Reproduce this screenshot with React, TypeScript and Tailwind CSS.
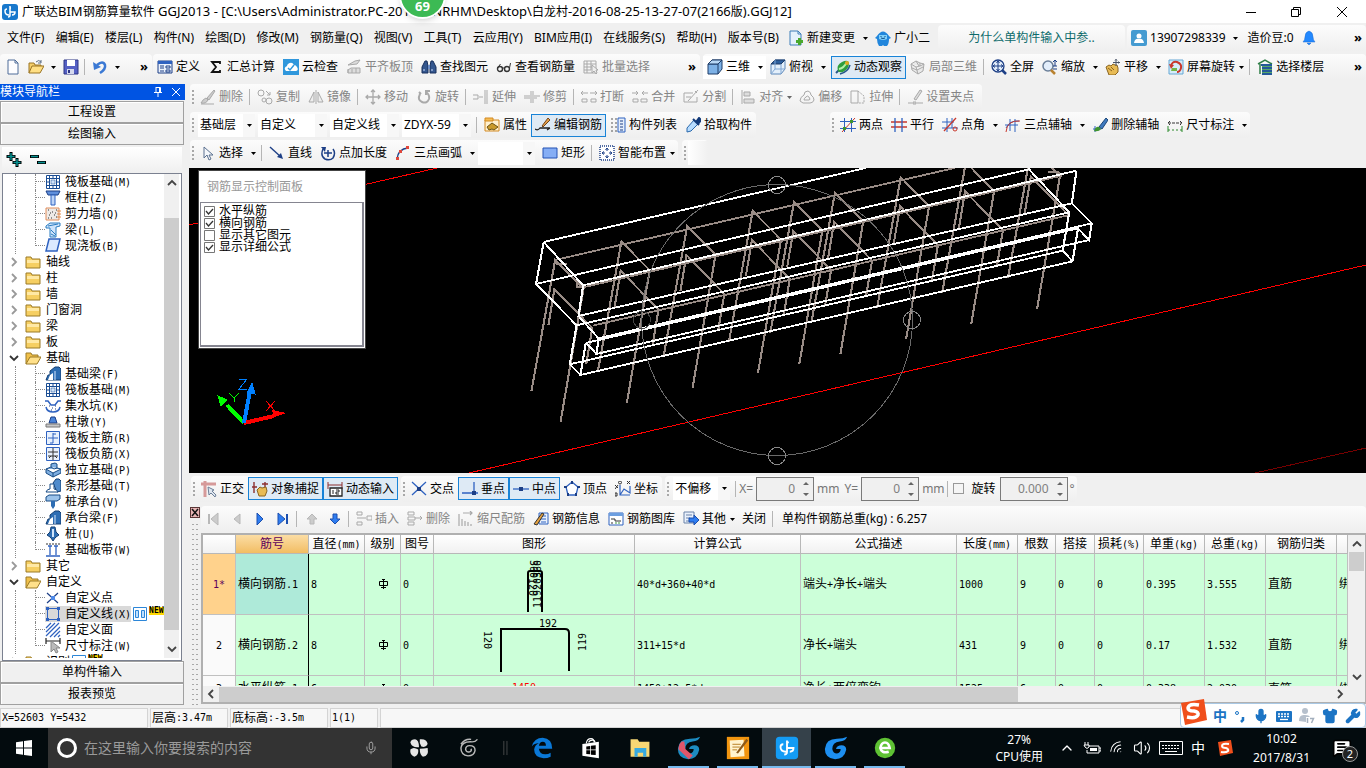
import type { ReactNode } from 'react';
import { Mic, ChevronUp, Wifi, Volume2, Shirt, Wrench, MessageSquareText } from 'lucide-react';

const B = '#2f62c0';
const G = '#a9a9a9';
const N = '#1d3f86';
const R = '#c8372c';

const glyphs: Record<string, ReactNode> = {
  newFile: <><path d="M3 1h7l3 3v11H3z" fill="#fdfdff" stroke="#4f6c99" /><path d="M10 1v3h3" fill="none" stroke="#4f6c99" /></>,
  open: <><path d="M1 14V4h5l1 2h6v2" fill="#f5cf6b" stroke="#9a7424" /><path d="M1 14l3-7h12l-4 7z" fill="#ffdf84" stroke="#9a7424" /><path d="M8 3q3-3 5 0m0-2v3h-3" fill="none" stroke="#5d6f86" /></>,
  save: <><path d="M1 1h14v14H1z" fill="#5560c4" stroke="#2c3484" /><path d="M4 1h8v6H4z" fill="#fff" /><path d="M4 10h7v5H4z" fill="#d5d9ee" /><path d="M5 11h2v3H5z" fill="#2c3484" /></>,
  undo: <><path d="M5 6q6-5 8 0q1 4-5 8" fill="none" stroke="#3b79d4" strokeWidth="2.5" /><path d="M1 3l1 8 7-3z" fill="#3b79d4" /></>,
  define: <><path d="M1 2h14v12H1z" fill="#eaf1fc" stroke={N} /><path d="M1 2h14v3H1z" fill={B} /><path d="M3 7h4M3 9h4M3 12h4M9 7h4v2H9zM9 11h4v2H9z" fill="none" stroke={N} /></>,
  sigma: <path d="M12 5V3H4l4 5-4 5h8v-2" fill="none" stroke="#111" strokeWidth="1.8" />,
  cloud: <><path d="M0 0h16v16H0z" fill="#2f97dc" /><path d="M3 12h10q3-1 1-4q-1-2-3-2q-2-4-6-1q-1 1-1 2q-4 2-1 5z" fill="#fff" /><path d="M5 9l2 2 4-5" fill="none" stroke="#2f97dc" strokeWidth="1.5" /></>,
  slab: <><path d="M2 6l7-4 5-1-3 4zM5 9h9v5H2v-3z" fill="#ddd" stroke={G} /><path d="M2 14v-4M6 14v-4M10 14V9" stroke={G} /></>,
  find: <><path d="M1 8l3-6h2l1 5v7H1zM15 8l-3-6h-2L9 7v7h6z" fill="#34578f" stroke="#172f5b" /><path d="M7 6h2v4H7z" fill="#6d8fc9" /><path d="M3 10v2M11 10v2" stroke="#cfe0ff" /></>,
  glasses: <><circle cx="4" cy="10" r="2.5" fill="none" stroke="#333" strokeWidth="1.4" /><circle cx="11" cy="10" r="2.5" fill="none" stroke="#333" strokeWidth="1.4" /><path d="M6.500 9h2M1.500 9l3-4M13.500 9l1-5" fill="none" stroke="#333" /></>,
  batch: <><path d="M1 2h12v12H1zM1 5h12M1 8h8M1 11h7M4 2v12M8 2v9" fill="none" stroke={G} /><path d="M9 6v8l2-2 2 3 1-1-1-3h2z" fill="#eee" stroke={G} /></>,
  cube: <><path d="M1 5l4-4h10v9l-4 5H1z" fill="#7db1e6" stroke="#1e3d69" /><path d="M1 5h10v10M11 5l4-4" fill="none" stroke="#1e3d69" /><path d="M1 5l4-4h10l-4 4z" fill="#b7d7f5" stroke="#1e3d69" /></>,
  topView: <><path d="M1 5l4-4h10v9l-4 5H1z" fill="#e3effb" stroke="#5b86b8" /><path d="M1 5l4-4h10l-4 4z" fill="#2c5f9e" stroke="#1e3d69" /><path d="M11 5v10M5 1v9h10M5 10l-4 5" fill="none" stroke="#7fa6d4" /></>,
  orbit: <><path d="M1 14l3-3" stroke="#25578a" strokeWidth="2" /><path d="M3 12Q1 6 7 3q6-3 7 1 0 6-6 9-4 1-5-1z" fill="#2f9e3c" /><path d="M4 10q5-1 8-7" fill="none" stroke="#b4f0a8" strokeWidth="2" /><path d="M5 15q8-2 10-9" fill="none" stroke="#25578a" strokeWidth="1.500" /><circle cx="12" cy="4" r="2" fill="#e2a81f" /></>,
  partial: <path d="M1 5l5-3 4 2 4 1-1 7-5 3-6-4zM1 5l5 3 4-1M6 8l2 7M6 2l3 5M10 4v3l4-2M2 9l5 2 6-3" fill="#e9e9e9" stroke={G} />,
  full: <><circle cx="7" cy="7" r="6" fill="#e3eefb" stroke={N} strokeWidth="1.300" /><path d="M7 2v10M2 7h10M5.500 4L7 2l1.500 2M5.500 10L7 12l1.500-2M4 5.500L2 7l2 1.500M10 5.500L12 7l-2 1.500" fill="none" stroke={N} /><path d="M11 11l4 4" stroke={N} strokeWidth="2.500" /></>,
  zoom: <><circle cx="6" cy="7" r="5" fill="#e3eefb" stroke="#6b7f99" strokeWidth="1.500" /><path d="M9 11l4 4" stroke="#b98230" strokeWidth="2.500" /><path d="M13 1v6M11 3l2-2 2 2M11 7h4M11 10h4" fill="none" stroke={N} /></>,
  pan: <><path d="M1 8l3-2 2 1 2-2 2 1 2 0 1 3v4l-3 3H4z" fill="#e8bb55" stroke="#8a6420" /><path d="M3 9l4 3M6 8l3 3" stroke="#8a6420" /><path d="M11 0v7M8 3.500h7M10 1.500l1-1 1 1M13.500 2.500l1 1-1 1" fill="none" stroke="#4a5568" /></>,
  rotateView: <><path d="M1 1h14v14H1z" fill="#d5ecfa" stroke="#65a7d4" /><path d="M3 7q1-5 6-4q5 2 4 6-1 4-4 4" fill="none" stroke={R} strokeWidth="2" /><path d="M4 9h5v3H3z" fill="#73b546" /><path d="M1 5l2 5 3-4z" fill={R} /></>,
  floors: <><path d="M1 5l7-4 7 4M3 5v10" fill="none" stroke="#2e7d46" strokeWidth="1.500" /><path d="M4 6h11M5 9h10M5 12h10M5 15h10" stroke="#245a99" strokeWidth="2" /><path d="M5 7.500h10M5 10.500h10M5 13.500h10" stroke="#56a868" /></>,
  change: <><path d="M2 1h8l3 3v11H2z" fill="#e4f1fc" stroke="#3f7fb9" /><path d="M10 1v3h3" fill="none" stroke="#3f7fb9" /><path d="M10 8h3v2h2v3h-2v2h-3v-2H8v-3h2z" fill="#49a82d" /></>,
  mascot: <><path d="M2 6q6-9 12 0l2 2-2 1q0 5-2 7H9l-1-1-1 1H4q-2-3-2-7L0 8z" fill="#2186dc" /><path d="M4 5h8v4q-4 2-8 0z" fill="#7fd0fa" /><path d="M6 6v1M10 6v1M6 8q2 1 4 0" fill="none" stroke="#0a4c8c" /></>,
  user: <><rect width="16" height="16" rx="2" fill="#459bd1" /><circle cx="8" cy="6" r="2.500" fill="#fff" /><path d="M3 13q1-5 5-4q4-1 5 4z" fill="#fff" /></>,
  bell: <path d="M8 1q4 1 4 6 0 3 2 5H2q2-2 2-5 0-5 4-6zM6 13h4l-2 2z" fill="#2389ff" stroke="#1a6ad0" strokeWidth=".5" />,
  brush: <><path d="M14 1l-7 8 2 2 6-9zM6 9q-3 1-5 5 5 1 7-3z" fill="#ccc" stroke={G} /><path d="M1 15h13" stroke={G} /></>,
  copy: <><circle cx="4" cy="4" r="3" fill="none" stroke={G} /><circle cx="12" cy="12" r="3" fill="none" stroke={G} /><circle cx="7" cy="11" r="2" fill="none" stroke={G} /><path d="M9 2l4 4M13 3v3h-3" fill="none" stroke={G} /></>,
  mirror: <path d="M1 13L6 3v10zM15 13L10 3v10zM8 1v14" fill="#eee" stroke={G} />,
  move: <path d="M8 1v14M1 8h14M6 3l2-2 2 2M6 13l2 2 2-2M3 6L1 8l2 2M13 6l2 2-2 2" fill="none" stroke={G} strokeWidth="1.300" />,
  rotate: <path d="M4 5q-3 6 2 8q5 2 7-3q1-4-3-7M10 6V2h4M3 3l2 2" fill="none" stroke={G} strokeWidth="2" />,
  extend: <path d="M0 6h5v4H0M6 8h4M12 1v14M14 1v14" fill="none" stroke={G} />,
  trim: <path d="M0 7h6M0 9h6M7 2v12M9 2v12M10 7h6M10 9h3" fill="none" stroke={G} />,
  breakL: <path d="M0 4h7M2 2L0 4l2 2M9 4h7M14 2l2 2-2 2M1 10h5v3H1zM10 10h5v3h-5z" fill="none" stroke={G} />,
  merge: <path d="M0 4h6M4 2l2 2-2 2M10 4h6M12 2l-2 2 2 2M1 10h5v3H1zM9 10h6v3H9z" fill="none" stroke={G} />,
  split: <path d="M1 4h9M1 13h13V8M1 4v9M5 12L15 1M12 2l2 2M3 8h5" fill="none" stroke={G} />,
  align: <path d="M2 1v14M4 3h6v4H4zM4 10h10v4H4z" fill="#ddd" stroke={G} />,
  offset: <path d="M1 12q0-4 4-6 0-4 4-4 3 1 3 4 3 2 3 5-1 3-4 3H4zM5 11q0-2 2-3 1-2 3 0 2 3 0 3z" fill="none" stroke={G} />,
  stretch: <><path d="M1 2h7v12H1z" fill="none" stroke={G} /><path d="M8 2l6 5v7H8" fill="none" stroke={G} strokeDasharray="2 1" /></>,
  gripPt: <path d="M1 14h4M10 14h6M6 13h3v2H6zM7 10l6-9 2 1-6 9z" fill="#ddd" stroke={G} />,
  props: <><path d="M1 3h14v11H1z" fill="#fff1cf" stroke="#d38a22" /><path d="M1 1h8v3H1z" fill="#f6bd55" stroke="#d38a22" /><path d="M3 10l5-4 6 4-4 3-2-1-3 1z" fill="#c99a2c" stroke="#6e5415" /></>,
  editBar: <><path d="M0 12q3 2 5-1h10M12 13l3-2" fill="none" stroke="#222" strokeWidth="1.300" /><path d="M7 9l6-8 2 2-7 7z" fill="#e39f4b" stroke="#74461a" /></>,
  list: <><path d="M8 1h7v14H8z" fill="#e4edfa" stroke={B} /><path d="M10 4h3M10 7h3M10 10h3M10 13h3" stroke={N} /><path d="M1 2h2M5 2h2M1 6h2M5 6h2M1 10h2M5 10h2M1 14h2M5 14h2" stroke="#555" /></>,
  picker: <><path d="M9 3l4 4-7 7-4 1 0-4z" fill="#b7dcff" stroke="#2a69ac" /><path d="M8 2l6 6M11 5l3-4 2 2-3 4z" fill="#123a7a" stroke="#123a7a" strokeWidth="2" /></>,
  twoPt: <><path d="M0 4.500h16M0 11.500h16M4.500 1v14M11.500 1v14" stroke={B} /><path d="M2 15L15 1" stroke={R} /><path d="M10 3h3v3h-3zM3 10h3v3H3z" fill="#3d9430" /></>,
  parallel: <><path d="M0 5h16M0 10h16" stroke={R} strokeWidth="1.300" /><path d="M4 1v14M11 1v14" stroke={B} strokeWidth="1.300" /></>,
  angle: <><path d="M0 5h12M0 11h16M5 1v14M10 1v10" stroke={B} /><path d="M2 14L14 1" stroke={R} strokeWidth="1.300" /><circle cx="13" cy="12" r="2" fill="none" stroke={R} /></>,
  threeAxis: <><path d="M1 11q4-8 13-7M0 8h13M5 2v12M10 2v13" fill="none" stroke={B} /><path d="M1 15q1-12 14-11" fill="none" stroke={R} /></>,
  delAxis: <><path d="M1 12h8M3 9v6" stroke={B} /><path d="M7 10l7-9 2 2-6 9z" fill="#3f7abf" stroke="#1c4778" /><path d="M2 14q2-5 5-4l2 2q-2 3-7 2z" fill="#3f9430" /></>,
  dim: <><path d="M1 6h14M3 4L1 6l2 2M13 4l2 2-2 2" fill="none" stroke="#333" strokeDasharray="3 1" /><path d="M1 9v6M15 9v6" stroke="#2c8a2c" /><path d="M1 13h14" stroke="#2c8a2c" strokeDasharray="2 2" /></>,
  cursor: <path d="M4 2v11l3-3 2 5 2-1-2-4h4z" fill="#f4f7fb" stroke="#5b7190" />,
  line: <><path d="M1 2l11 10" stroke={N} strokeWidth="1.400" /><path d="M14 14l-6-2 4-4z" fill={N} /></>,
  ptLen: <><path d="M3 4q-3 7 2 10 5 2 8-1 3-5 0-9M8 5v7M4 8h8" fill="none" stroke={N} strokeWidth="1.500" /><path d="M1 2l5 0-1 5z" fill={N} /></>,
  arc: <><path d="M2 14Q3 4 13 3" fill="none" stroke={N} strokeWidth="1.300" /><path d="M1 12h3v3H1zM4 5h3v3H4zM11 1h3v3h-3z" fill="#e0463a" /></>,
  rect: <path d="M1 3h14v10H1z" fill="#86aef5" stroke="#2552b4" />,
  smart: <><path d="M1 1h14v14H1z" fill="#fff" stroke={N} strokeDasharray="1 1" strokeWidth="1.500" /><path d="M8 3v3M8 10v3M3 8h3M10 8h3M6.500 5L8 3l1.500 2M6.500 11L8 13l1.500-2M5 6.500L3 8l2 1.500M11 6.500L13 8l-2 1.500" fill="none" stroke={N} /></>,
  ortho: <><path d="M0 3h15M4 0v16" stroke="#d69a9a" strokeWidth="3" /><path d="M7 6l1 8 2-2 4 4 1-2-4-4 2-1z" fill="#dfe6ef" stroke="#6c7f98" /></>,
  snap: <><path d="M2 1v11M0 6h5M13 1v5M10 3h6" stroke="#8c2f2f" strokeWidth="1.400" /><path d="M5 9l3-3 2 1 4-1 1 4-2 5H7z" fill="#e8bb55" stroke="#8a6420" /></>,
  dyn: <><path d="M1 1v7M15 1v7M1 4h14" stroke="#8c2f2f" /><path d="M3 7h12v8H3z" fill="#fff" stroke="#222" strokeWidth="1.300" /><path d="M6 9v4M9 9h3v2H9v2h3" fill="none" stroke="#222" /></>,
  cross: <><path d="M1 1l14 13M15 1L1 14" stroke={B} strokeWidth="1.300" /><path d="M6 6h4v4H6z" fill={N} /></>,
  perp: <><path d="M0 12h16M12 1v11" stroke={B} strokeWidth="1.300" /><path d="M10 10h4v4h-4z" fill={N} /></>,
  mid: <><path d="M0 8h16" stroke={B} strokeWidth="1.300" /><path d="M6 6h4v4H6z" fill={N} /></>,
  vertex: <><path d="M8 1l6 5-2 8H4L2 6z" fill="#fff" stroke={B} strokeWidth="1.300" /><path d="M7 0h2v3H7zM0 5h3v2H0zM13 5h3v2h-3zM3 12h2v3H3zM11 12h2v3h-2z" fill={N} /></>,
  coord: <><path d="M5 4v10h10M5 14l4-6 6 4V5" fill="none" stroke={B} strokeWidth="1.200" /><circle cx="5" cy="1.500" r="1.500" fill="none" stroke="#333" /><path d="M0 4l3 3M3 4L0 8M12 0l3 3M15 0l-3 3M0 12h2v3H0z" fill="none" stroke="#333" /></>,
  first: <><path d="M3 3v10" stroke="#b8b8b8" strokeWidth="2" /><path d="M12 2v12L5 8z" fill="#ccc" stroke="#b8b8b8" /></>,
  prev: <path d="M11 3v10L5 8z" fill="#ccc" stroke="#b8b8b8" />,
  next: <path d="M5 2v12l6-6z" fill="#2f7df0" stroke="#1c4fae" />,
  last: <><path d="M3 2v12l7-6z" fill="#2f7df0" stroke="#1c4fae" /><path d="M12 3v10" stroke="#1c4fae" strokeWidth="2" /></>,
  up: <path d="M8 3l5 5h-3v5H6V8H3z" fill="#ccc" stroke="#b8b8b8" />,
  down: <path d="M8 13l5-5h-3V3H6v5H3z" fill="#2f7df0" stroke="#1c4fae" />,
  insert: <path d="M1 1h5v3H1zM1 11h5v3H1zM1 7h5M6 7h4M11 5h5v4h-5z" fill="none" stroke={G} />,
  remove: <path d="M1 1h6v3H1zM1 11h6v3H1zM1 6h7v3H1zM8 7h7M13 5l2 2-2 2" fill="none" stroke={G} />,
  scale: <path d="M1 3v12M5 2h9M12 0l2 2-2 2M4 8v7M7 10v5M10 11v4M13 13v2" fill="none" stroke={G} strokeWidth="1.200" />,
  info: <><path d="M6 2h9v11H6z" fill="#eaf1fc" stroke={B} /><path d="M8 5h5M8 8h5M8 11h5" stroke={B} /><path d="M1 13l8-11 2 1-7 11z" fill="#e3a03f" stroke="#333" /></>,
  lib: <><path d="M1 2h14v12H1z" fill="#fff" stroke={B} /><path d="M1 2h14v3H1z" fill="#6d9fe0" /><path d="M3 8h4v2h6M3 12h2" fill="none" stroke="#333" /><path d="M7 12h6" stroke="#3c9a3c" strokeDasharray="2 1" /></>,
  other: <><path d="M1 1h10v11H1z" fill="#eaf1fc" stroke="#6b83a8" /><path d="M3 4h6M3 7h4M3 10h3" stroke="#6b83a8" /><path d="M6 7h5V4l5 5-5 5v-3H6z" fill="#2f7df0" stroke="#1c4fae" /></>,
  raft: <><path d="M1.500 1.500h13v13h-13z" fill="#fff" stroke="#1a4d94" /><path d="M4.500 1v14M11.500 1v14M1 4.500h14M1 11.500h14M8 1v3M8 12v3M1 8h3M12 8h3" stroke="#1a4d94" /><path d="M6 6h4v4H6z" fill="#cfe2f8" stroke="#1a4d94" strokeWidth=".5" /></>,
  column: <><path d="M1 1h14l-2 4H3z" fill="#5f8fdc" stroke={N} /><path d="M6 5h4v10H6z" fill="#bdd4f7" stroke={B} /></>,
  wall: <><path d="M1 2h13v12H1z" fill="#eeeae6" stroke="#e08c5a" /><path d="M3 4h1M7 6h1M11 4h1M4 9h1M9 9h1M6 12h1M11 11h1M5 7h1M10 7h1M3 12h1" stroke="#333" /><path d="M12 5h4M12 8h4M12 11h4" stroke="#e08c4a" /></>,
  beam: <><path d="M1 4l4-3h10v3l-4 1v10H5V6H1z" fill="#cfe4fb" stroke="#2b7cc0" /><path d="M3 4l10-2M6 8l5 5M6 12l4 2" stroke="#2b7cc0" /></>,
  plate: <path d="M4 1h11l-3 12H1z" fill="#dbe9ff" stroke={B} strokeWidth="1.500" />,
  fbeam: <><path d="M1 14l2-5h2V5l5-4h4l2 2v11z" fill="#2d6db3" stroke="#143f73" /><path d="M3 14l2-5 3-2v7z" fill="#fff" /><path d="M10 5v9" stroke="#d6e8ff" /></>,
  pit: <><path d="M0 3h3l3 4h4l3-4h3M1 9q1 5 7 5t7-5" fill="none" stroke={B} strokeWidth="1.500" /><path d="M4 8h1M7 10h1M10 8h1M6 12h1M10 11h1" stroke={N} /></>,
  pier: <><path d="M6 3h4l2 6H4z" fill="#4a84d8" stroke={N} /><path d="M1 10h14v3H1z" fill="#c8c8c8" stroke="#777" /></>,
  rmain: <><path d="M1.500 1.500h13v13h-13z" fill="#e8f1fd" stroke={B} /><path d="M8 3v10M3 8h10M8 4h3M8 13H5" stroke={B} fill="none" /></>,
  rneg: <><path d="M1.500 1.500h13v13h-13z" fill="#e8f1fd" stroke={B} /><path d="M8 2v12M3 6h10M3 10h10M4 12l2-2M12 12l-2-2" stroke="#333" fill="none" /></>,
  indep: <path d="M1 7l5-2V2l4-1 2 1v4l4 1v4l-8 4-7-4zM1 7l7 4 8-4M6 5l3 2 3-1M8 11v4" fill="#7eaee0" stroke="#164a84" />,
  strip: <><path d="M8 5l3-4h3l2 2v10l-4 1z" fill="#4f8bcc" stroke="#143f73" /><path d="M1 14q1-3 4-3V6h4v5q3 0 4 3z" fill="#fff" stroke="#164a84" /></>,
  cap: <><path d="M1 3l3-2h11v4l-3 2H1z" fill="#9cc3ea" stroke="#164a84" /><path d="M6 7h4v5l-2 3-2-3z" fill="#2d6db3" /></>,
  pile: <><path d="M6 1h4l1 5 3 3-3 2-1 1-2 3-2-3-1-1-3-2 3-3z" fill="#2d6db3" stroke="#143f73" /><path d="M8 3v8" stroke="#cfe4fb" strokeWidth="2" /></>,
  band: <><path d="M1 2h14" stroke="#333" strokeDasharray="2 1" /><path d="M1 14h14M5 4v9M11 4v9M3 4h4M9 4h4" stroke={B} strokeWidth="1.300" /></>,
  cpoint: <><path d="M2 3l11 10M13 3L2 13" stroke={N} strokeWidth="1.200" /><path d="M6 6h4v4H6z" fill="#4f8ae8" /></>,
  cline: <><path d="M2.500 2.500h11v11h-11z" fill="none" stroke={B} /><path d="M1 1h3v3H1zM12 1h3v3h-3zM1 12h3v3H1zM12 12h3v3h-3z" fill={B} /></>,
  cface: <path d="M1 6l5-5M1 10l9-9M1 14l13-13M5 15L15 5M9 15l6-6M13 15l2-2" stroke={B} strokeWidth="1.200" />,
  cdim: <><path d="M1 0v6M15 0v6M1 3h14" stroke="#222" strokeWidth="1.200" /><path d="M6 3v11l3-3 2 4 2-1-2-4h4z" fill="#bbb" stroke="#888" /></>,
  folder: <><path d="M1 3h5l1 2h8v9H1z" fill="#f6cf62" stroke="#9b7a26" /><path d="M2 6h12v3H2z" fill="#ffe9a5" /></>,
  folderOpen: <><path d="M1 14V3h5l1 2h6v3" fill="#f0c04a" stroke="#9b7a26" /><path d="M1 14l4-7h11l-4 7z" fill="#ffe08a" stroke="#9b7a26" /></>,
};

function Glyph({ n }: { n: string }) {
  return <svg viewBox="0 0 16 16" className="h-4 w-4 shrink-0" aria-hidden="true">{glyphs[n]}</svg>;
}

function Caret({ muted }: { muted?: boolean }) {
  return <svg viewBox="0 0 5 3" className={`h-[3px] w-[5px] shrink-0 ${muted ? 'text-[#666]' : 'text-black'}`} aria-hidden="true"><path d="M0 0h5L2.500 3z" fill="currentColor" /></svg>;
}

type ToolProps = { icon?: string; label: string; active?: boolean; off?: boolean; menu?: 'split' | 'inline' };

function Tool({ icon, label, active, off, menu }: ToolProps) {
  return (
    <>
      <button
        type="button"
        disabled={off}
        className={`flex h-[23px] shrink-0 items-center gap-[3px] px-1 whitespace-nowrap ${active ? 'bg-[#deeaf5] ring-1 ring-inset ring-[#1883d7]' : ''} ${off ? 'text-[#858585]' : 'text-black'}`}
      >
        {icon && <Glyph n={icon} />}
        {label}
      </button>
      {menu && (
        <button type="button" aria-label={`${label}选项`} className={`flex h-[23px] shrink-0 items-center ${menu === 'split' ? 'w-3 justify-center' : 'w-2'}`}>
          <Caret muted={off} />
        </button>
      )}
    </>
  );
}

function IconBtn({ icon, label }: { icon: string; label: string }) {
  return <button type="button" aria-label={label} className="flex h-[23px] w-[23px] shrink-0 items-center justify-center"><Glyph n={icon} /></button>;
}

const Sep = () => <span className="mx-0.5 h-4 w-0.5 shrink-0 border-l border-[#b5b5b5]" />;
const Grip = () => <span className="mr-0.5 ml-0.5 h-3.5 w-0.5 shrink-0 bg-[repeating-linear-gradient(#a8a8a8_0_2px,transparent_2px_4px)]" />;

function Strip({ children, className = '' }: { children: ReactNode; className?: string }) {
  return <div className={`flex h-[26px] items-center rounded-sm bg-gradient-to-b from-[#fcfcfc] to-[#efefef] ${className}`}>{children}</div>;
}

function Combo({ label, value, className }: { label: string; value: string; className: string }) {
  return (
    <label className={`relative mr-[3px] flex h-[23px] shrink-0 items-center bg-white ${className}`}>
      <select aria-label={label} className="h-full w-full appearance-none bg-transparent pl-0.5 outline-none"><option>{value}</option></select>
      <span className="pointer-events-none absolute inset-y-0 right-0 flex w-3 items-center justify-center bg-[#f7f7f7]"><Caret /></span>
    </label>
  );
}

// CJK runs stay at 12px, Latin runs get their own size (a 6px mono cell by default)
function Song({ text, latin = 'text-[10px]' }: { text: string; latin?: string }) {
  return <>{text.split(/([\x20-\x7e]+)/).map((s, i) => (i % 2 ? <span key={i} className={`whitespace-pre ${latin}`}>{s}</span> : s))}</>;
}
const song = "font-['DejaVu_Sans_Mono','Noto_Sans_CJK_SC',monospace]";

const More = () => <span className="h-5 text-[13px] leading-none font-bold">»</span>;

function TitleBar() {
  return (
    <header className="relative flex h-[23px] shrink-0 items-center bg-white">
      <svg viewBox="0 0 16 16" className="mr-1 ml-0.5 h-4 w-4"><rect width="16" height="16" rx="3" fill="#1878cc" /><path d="M8 2v9q0 2-2 2M3 7q0 4 4 4M5 5q-2 0-2 2M8 4h1M8 8h5q0 3-3 3" fill="none" stroke="#fff" strokeWidth="1.500" /></svg>
      <h1 className="whitespace-pre"><Song latin="text-[13px]" text="广联达BIM钢筋算量软件 GGJ2013 - [C:\Users\Administrator.PC-201407NRHM\Desktop\白龙村-2016-08-25-13-27-07(2166版).GGJ12]" /></h1>
      <div className="absolute -top-7 left-[399px] flex h-[47px] w-[47px] items-end justify-center rounded-full border-2 border-white bg-[#3cba54] shadow-md">
        <span className="pb-1 text-[13px] leading-none font-bold text-white">69</span>
      </div>
      <div className="ml-auto flex">
        <button type="button" aria-label="最小化" className="flex h-5 w-[45px] items-center justify-center"><svg viewBox="0 0 10 10" className="h-2.5 w-2.5"><path d="M0 5.500h10" stroke="#000" /></svg></button>
        <button type="button" aria-label="还原" className="flex h-5 w-[45px] items-center justify-center"><svg viewBox="0 0 10 10" className="h-2.5 w-2.5"><path d="M.5 2.500h7v7h-7zM2.500 2.500v-2h7v7h-2" fill="none" stroke="#000" /></svg></button>
        <button type="button" aria-label="关闭" className="flex h-5 w-[48px] items-center justify-center"><svg viewBox="0 0 10 10" className="h-2.5 w-2.5"><path d="M0 0l10 10M10 0L0 10" stroke="#000" /></svg></button>
      </div>
    </header>
  );
}

const menus = ['文件(F)', '编辑(E)', '楼层(L)', '构件(N)', '绘图(D)', '修改(M)', '钢筋量(Q)', '视图(V)', '工具(T)', '云应用(Y)', 'BIM应用(I)', '在线服务(S)', '帮助(H)', '版本号(B)'];

function MenuBar() {
  return (
    <div className="flex h-[30px] shrink-0 items-center">
      <nav className="flex w-[784px] shrink-0 items-center justify-between pl-0.5">
        {menus.map((m) => <button key={m} type="button" className="px-[5px] whitespace-nowrap">{m}</button>)}
      </nav>
      <Tool icon="change" label="新建变更" menu="split" />
      <Tool icon="mascot" label="广小二" />
      <Strip className="ml-1 w-[187px] shrink-0 justify-center"><a href="#faq" className="text-[#0d6b6b]">为什么单构件输入中参..</a></Strip>
      <Strip className="ml-0.5 flex-1">
        <Tool icon="user" label="13907298339" menu="split" />
        <span className="w-0.5" />
        <Tool label="造价豆:0" />
        <IconBtn icon="bell" label="消息" />
        <span className="ml-auto pr-1"><More /></span>
      </Strip>
    </div>
  );
}

function MainTools() {
  return (
    <div className="flex h-[31px] shrink-0 items-start gap-px pt-px">
      <Strip className="w-[152px] shrink-0 pl-px">
        <IconBtn icon="newFile" label="新建" />
        <IconBtn icon="open" label="打开" />
        <span className="flex w-3 justify-center"><Caret /></span>
        <IconBtn icon="save" label="保存" />
        <Sep />
        <IconBtn icon="undo" label="撤销" />
        <span className="flex w-3 justify-center"><Caret /></span>
        <span className="ml-auto pr-1"><More /></span>
      </Strip>
      <Strip className="w-[547px] shrink-0">
        <Tool icon="define" label="定义" />
        <Tool icon="sigma" label="汇总计算" />
        <Tool icon="cloud" label="云检查" />
        <Tool icon="slab" label="平齐板顶" off />
        <Tool icon="find" label="查找图元" />
        <Tool icon="glasses" label="查看钢筋量" />
        <Tool icon="batch" label="批量选择" off />
        <span className="ml-auto pr-1"><More /></span>
      </Strip>
      <Strip className="ml-0.5 min-w-0 flex-1">
        <div className="flex bg-white"><Tool icon="cube" label="三维" menu="split" /></div>
        <Tool icon="topView" label="俯视" menu="split" />
        <span className="w-0.5" />
        <Tool icon="orbit" label="动态观察" active />
        <Tool icon="partial" label="局部三维" off />
        <Sep />
        <Tool icon="full" label="全屏" />
        <Tool icon="zoom" label="缩放" menu="split" />
        <Tool icon="pan" label="平移" menu="split" />
        <Tool icon="rotateView" label="屏幕旋转" menu="inline" />
        <Sep />
        <Tool icon="floors" label="选择楼层" />
        <span className="ml-auto pr-1"><More /></span>
      </Strip>
    </div>
  );
}

function DrawTools() {
  return (
    <div className="flex flex-col items-start gap-0.5 pb-0.5">
      <Strip className="pr-1">
        <Grip />
        <Tool icon="brush" label="删除" off />
        <Sep />
        <Tool icon="copy" label="复制" off />
        <Tool icon="mirror" label="镜像" off />
        <Sep />
        <Tool icon="move" label="移动" off />
        <Tool icon="rotate" label="旋转" off />
        <Sep />
        <Tool icon="extend" label="延伸" off />
        <Tool icon="trim" label="修剪" off />
        <Sep />
        <Tool icon="breakL" label="打断" off />
        <Tool icon="merge" label="合并" off />
        <Tool icon="split" label="分割" off />
        <Sep />
        <Tool icon="align" label="对齐" off menu="inline" />
        <Tool icon="offset" label="偏移" off />
        <Tool icon="stretch" label="拉伸" off />
        <Sep />
        <Tool icon="gripPt" label="设置夹点" off />
      </Strip>
      <div className="flex gap-[74px]">
        <Strip>
          <Grip />
          <span className="w-0.5" />
          <Combo label="楼层" value="基础层" className="w-[57px]" />
          <Combo label="构件类别" value="自定义" className="w-[69px]" />
          <Combo label="构件类型" value="自定义线" className="w-[69px]" />
          <Combo label="构件" value="ZDYX-59" className="w-[69px]" />
          <Sep />
          <Tool icon="props" label="属性" />
          <Tool icon="editBar" label="编辑钢筋" active />
          <Tool icon="list" label="构件列表" />
          <Tool icon="picker" label="拾取构件" />
        </Strip>
        <Strip>
          <Grip />
          <Tool icon="twoPt" label="两点" />
          <Tool icon="parallel" label="平行" />
          <Tool icon="angle" label="点角" menu="split" />
          <Tool icon="threeAxis" label="三点辅轴" menu="split" />
          <Tool icon="delAxis" label="删除辅轴" />
          <Tool icon="dim" label="尺寸标注" menu="split" />
        </Strip>
      </div>
      <div className="flex gap-1">
        <Strip>
          <Grip />
          <Tool icon="cursor" label="选择" menu="split" />
          <Sep />
          <Tool icon="line" label="直线" />
          <Tool icon="ptLen" label="点加长度" />
          <Tool icon="arc" label="三点画弧" menu="split" />
          <Combo label="画弧参数" value="" className="w-[57px]" />
          <Tool icon="rect" label="矩形" />
          <Sep />
          <Tool icon="smart" label="智能布置" menu="inline" />
        </Strip>
        <Strip><Grip /><span className="h-6 w-5 bg-gradient-to-r from-white to-[#f0f0f0]" /></Strip>
      </div>
    </div>
  );
}

type Node = { t: string; icon?: string; open?: boolean; sel?: boolean; last?: boolean };
const tree: Node[] = [
  { t: '筏板基础(M)', icon: 'raft' }, { t: '框柱(Z)', icon: 'column' }, { t: '剪力墙(Q)', icon: 'wall' }, { t: '梁(L)', icon: 'beam' }, { t: '现浇板(B)', icon: 'plate', last: true },
  { t: '轴线' }, { t: '柱' }, { t: '墙' }, { t: '门窗洞' }, { t: '梁' }, { t: '板' }, { t: '基础', open: true },
  { t: '基础梁(F)', icon: 'fbeam' }, { t: '筏板基础(M)', icon: 'raft' }, { t: '集水坑(K)', icon: 'pit' }, { t: '柱墩(Y)', icon: 'pier' },
  { t: '筏板主筋(R)', icon: 'rmain' }, { t: '筏板负筋(X)', icon: 'rneg' }, { t: '独立基础(P)', icon: 'indep' }, { t: '条形基础(T)', icon: 'strip' },
  { t: '桩承台(V)', icon: 'cap' }, { t: '承台梁(F)', icon: 'fbeam' }, { t: '桩(U)', icon: 'pile' }, { t: '基础板带(W)', icon: 'band', last: true },
  { t: '其它' }, { t: '自定义', open: true },
  { t: '自定义点', icon: 'cpoint' }, { t: '自定义线(X)', icon: 'cline', sel: true }, { t: '自定义面', icon: 'cface' }, { t: '尺寸标注(W)', icon: 'cdim', last: true },
  { t: '识别' },
];

const NewTag = () => (
  <span className="flex shrink-0 items-start pl-0.5">
    <svg viewBox="0 0 14 14" className="h-3.5 w-3.5"><path d="M.5.5h13v13H.5z" fill="#fff" stroke="#2c86d8" /><path d="M2.500 3.500h3v7h-3zM8.500 3.500h3v7h-3z" fill="#bfe0ff" stroke="#2c86d8" /></svg>
    <span className="ml-0.5 bg-[#ffd800] text-[8px] leading-[8px] font-bold">NEW</span>
  </span>
);

function TreeRow({ n }: { n: Node }) {
  if (n.icon) {
    return (
      <li className="flex h-4 items-center">
        <span className="ml-3 h-4 w-5 shrink-0 border-l border-dotted border-[#888]" />
        <span className={`flex w-2.5 shrink-0 flex-col self-stretch ${n.last ? '' : 'border-l border-dotted border-[#888]'}`}>
          <span className={`h-2 border-b border-dotted border-[#888] ${n.last ? 'border-l' : ''}`} />
        </span>
        <span className={`flex h-4 items-center gap-1 whitespace-nowrap ${n.sel ? 'bg-[#d9d9d9]' : ''}`}>
          <Glyph n={n.icon} />
          <span><Song text={n.t} /></span>
        </span>
        {n.sel && <NewTag />}
      </li>
    );
  }
  return (
    <li className="flex h-4 items-center whitespace-nowrap">
      <svg viewBox="0 0 10 10" className="mr-1.5 ml-1.5 h-2.5 w-2.5"><path d={n.open ? 'M1 3l4 4 4-4' : 'M3 1l4 4-4 4'} fill="none" stroke={n.open ? '#333' : '#999'} strokeWidth="1.800" /></svg>
      <Glyph n={n.open ? 'folderOpen' : 'folder'} />
      <span className="ml-[5px]">{n.t}</span>
      {n.t === '识别' && <NewTag />}
    </li>
  );
}

function Chev({ d }: { d: string }) {
  return <svg viewBox="0 0 10 10" className="h-2.5 w-2.5 shrink-0"><path d={d} fill="none" stroke="#444" strokeWidth="1.800" /></svg>;
}

const sideBtn = 'h-[22px] shrink-0 border border-[#a0a0a0] bg-[#f0f0f0] text-center shadow-[inset_1px_1px_#fff]';

function Sidebar() {
  return (
    <aside className={`flex w-[185px] shrink-0 flex-col ${song}`}>
      <div className="flex h-4 shrink-0 items-center bg-[#0054e3] text-white">
        模块导航栏
        <svg viewBox="0 0 10 10" className="ml-auto h-2.5 w-2.5"><path d="M3 .5h4.500v5M3 0v5M1 5.500h8M5 6v4M6.500 0v5" fill="none" stroke="#fff" /></svg>
        <svg viewBox="0 0 10 10" className="mr-1 ml-2 h-2.5 w-2.5"><path d="M1 1l8 8M9 1L1 9" stroke="#fff" /></svg>
      </div>
      <div className="flex min-h-0 flex-1 flex-col pt-px pr-px pb-0.5">
        <button type="button" className={sideBtn}>工程设置</button>
        <button type="button" className={sideBtn}>绘图输入</button>
        <div className="mx-0.5 mt-0.5 flex h-[26px] shrink-0 items-center gap-2 bg-gradient-to-b from-white to-[#efefef] pl-1">
          <svg viewBox="0 0 16 16" className="h-4 w-4"><path d="M5 0v9M.5 4.500h9M11 6v9M6.500 10.500h9" stroke="#000" strokeWidth="3" /><path d="M5 1v7M1.500 4.500h7M11 7v7M7.500 10.500h7" stroke="#079191" strokeWidth="1.500" /></svg>
          <svg viewBox="0 0 16 16" className="h-4 w-4"><path d="M0 4.500h9M7 10.500h9" stroke="#000" strokeWidth="3" /><path d="M1 4.500h7M8 10.500h7" stroke="#079191" strokeWidth="1.500" /></svg>
        </div>
        <div className="mx-0.5 flex min-h-0 flex-1 border border-[#7b8190] bg-white pr-0.5 pb-0.5">
          <ul className="min-w-0 flex-1 overflow-hidden">{tree.map((n, i) => <TreeRow key={i} n={n} />)}</ul>
          <div className="flex w-[15px] shrink-0 flex-col items-center bg-[#f0f0f0]">
            <span className="flex h-[44px] pt-1"><Chev d="M1 7l4-4 4 4" /></span>
            <span className="w-full flex-1 bg-[#cdcdcd]" />
            <span className="flex h-7 items-end pb-1"><Chev d="M1 3l4 4 4-4" /></span>
          </div>
        </div>
        <button type="button" className={sideBtn}>单构件输入</button>
        <button type="button" className={sideBtn}>报表预览</button>
      </div>
    </aside>
  );
}

const white = [
  'M62 246L903 24', 'M62 246L42 372L148 496M62 246L165 376L1454 32', 'M165 376L153 468L1442 130', 'M42 372L1330 28L1435 157', 'M148 496L1435 157',
  'M153 468L205 535L1494 190M172 549L1458 205', 'M205 535L200 582L1487 240', 'M172 549L200 582M172 549L158 645L1444 304', 'M148 496L130 613L158 645M130 613L1418 272L1444 304',
  'M1454 32L1442 130L1494 190L1487 240L1458 205L1444 304', 'M1435 157L1418 272',
];
// stirrup positions along the beam, as back top corners
const stirrups = [[92, 300], [265, 245], [437, 198], [608, 153], [716, 126], [823, 98], [995, 52], [1165, 7], [1337, -38]];

function Viewport() {
  return (
    <svg viewBox="0 0 1177 305" preserveAspectRatio="xMinYMin slice" className="h-full w-full" shapeRendering="crispEdges" role="img" aria-label="三维视图">
      <path d="M0 57L248 0M280 305L1177 97" stroke="#f00" fill="none" />
      <path d="M1066 305l111-25" stroke="#700" />
      <g transform="translate(331 -8) scale(.3827 .3333)" fill="none">
        <g stroke="#998c86" strokeWidth="5.500">
          <path d="M92 300L1135 24M165 382L1415 47M190 497L1435 165M92 300l5 12h25M165 380h-16v-12h12M1415 47l-10-12h-25" />
          {stirrups.map(([x, y]) => (
            <path key={x} d={`M${x - 62} ${y + 392}L${x} ${y}L${x + 74} ${y + 86}L${x + 14} ${y + 485}M${x - 18} ${y + 196}L${x - 2} ${y + 87}L${x + 97} ${y + 204}L${x + 81} ${y + 312}`} />
          ))}
        </g>
        <g stroke="#fff" strokeWidth="5.500">{white.map((d) => <path key={d} d={d} />)}</g>
      </g>
      <g fill="none" stroke="#6a6a6a">
        <circle cx="588" cy="152" r="135.500" />
        <circle cx="588" cy="17" r="8.500" stroke="#888" /><circle cx="588" cy="288" r="8.500" stroke="#888" /><circle cx="723" cy="152" r="8.500" stroke="#888" /><circle cx="453" cy="152" r="8.500" stroke="#444" />
      </g>
      <g strokeWidth="4" fill="none">
        <path d="M55 255l30-7" stroke="#f00" /><path d="M97 245l-14-3 2 7z" fill="#f00" />
        <path d="M55 255L38 237" stroke="#0f0" /><path d="M29 228l3 10 6-6z" fill="#0f0" stroke="#0f0" strokeWidth="1" />
        <path d="M55 255l6-32" stroke="#0080ff" /><path d="M63 215l-5 10 8 1z" fill="#0080ff" stroke="#0080ff" strokeWidth="1" />
      </g>
      <g fill="none" strokeWidth="1">
        <path d="M77 233l9 10M86 233l-9 10" stroke="#f00" /><path d="M40 225l5 5 5-5M45 230v4" stroke="#0f0" /><path d="M50 211h8l-8 10h8" stroke="#0080ff" />
      </g>
    </svg>
  );
}

const layers = [['水平纵筋', true], ['横向钢筋', true], ['显示其它图元', false], ['显示详细公式', true]] as const;

function LayerPanel() {
  return (
    <section className="absolute top-0.5 left-[9px] flex h-[179px] w-[168px] flex-col border border-[#444] bg-white p-px">
      <h2 className="flex h-[30px] items-center pl-[7px] text-[#999]">钢筋显示控制面板</h2>
      <div className={`flex-1 border border-r-2 border-b-2 border-[#858590] pt-0.5 pl-[3px] ${song}`}>
        {layers.map(([name, on]) => (
          <label key={name} className="flex h-3 items-center gap-1 leading-3">
            <input type="checkbox" defaultChecked={on} className="peer sr-only" />
            <svg viewBox="0 0 11 11" className="h-[11px] w-[11px] peer-checked:[&>path+path]:block"><path d="M.5.5h10v10H.5z" fill="#fff" stroke="#777" /><path className="hidden" d="M2 5l2.500 3L9 3" fill="none" stroke="#333" strokeWidth="1.300" /></svg>
            {name}
          </label>
        ))}
      </div>
    </section>
  );
}

function Spin({ label, value, className }: { label: string; value: string; className: string }) {
  return (
    <span className={`relative h-6 shrink-0 border border-[#7a7a7a] ${className}`}>
      <input aria-label={label} defaultValue={value} className="h-full w-full bg-[#f0f0f0] pr-[18px] text-right text-[#808080] outline-none" />
      <svg viewBox="0 0 6 14" className="absolute top-1 right-1 h-3.5 w-1.5"><path d="M0 3l3-3 3 3zM0 11l3 3 3-3z" fill="#666" /></svg>
    </span>
  );
}

function SnapBar() {
  return (
    <div className="flex h-[31px] shrink-0 items-center gap-[3px] pl-0.5">
      <Strip>
        <Grip />
        <Tool icon="ortho" label="正交" />
        <Tool icon="snap" label="对象捕捉" active />
        <Tool icon="dyn" label="动态输入" active />
      </Strip>
      <Strip>
        <Grip />
        <Tool icon="cross" label="交点" />
        <Tool icon="perp" label="垂点" active />
        <Tool icon="mid" label="中点" active />
        <Tool icon="vertex" label="顶点" />
        <Tool icon="coord" label="坐标" />
      </Strip>
      <Strip>
        <Grip />
        <span className="w-0.5" />
        <Combo label="偏移方式" value="不偏移" className="w-[57px]" />
        <Sep />
        <div className="flex items-center gap-[3px] text-[#777]">
          X=<Spin label="X" value="0" className="w-[58px]" />mm
          <span className="pl-0.5">Y=</span><Spin label="Y" value="0" className="w-[58px]" />mm
        </div>
        <Sep />
        <label className="flex items-center gap-2 pr-1 pl-0.5"><input type="checkbox" className="h-[11px] w-[11px] appearance-none border border-[#999] bg-[#f5f5f5]" />旋转</label>
        <Spin label="旋转角度" value="0.000" className="w-[68px]" />
        <span className="px-0.5 text-[#777]">°</span>
      </Strip>
    </div>
  );
}

const cols: [string, string][] = [
  ['', 'w-[33px]'], ['筋号', 'w-[73px]'], ['直径(mm)', 'w-[56px]'], ['级别', 'w-[36px]'], ['图号', 'w-[33px]'], ['图形', 'w-[201px]'], ['计算公式', 'w-[166px]'], ['公式描述', 'w-[156px]'],
  ['长度(mm)', 'w-[61px]'], ['根数', 'w-[38px]'], ['搭接', 'w-[39px]'], ['损耗(%)', 'w-[49px]'], ['单重(kg)', 'w-[61px]'], ['总重(kg)', 'w-[61px]'], ['钢筋归类', 'w-[71px]'], [' ', ''],
];

const rows = [
  ['1*', '横向钢筋.1', '8', 'Φ', '0', '', '40*d+360+40*d', '端头+净长+端头', '1000', '9', '0', '0', '0.395', '3.555', '直筋', '绑扎'],
  ['2', '横向钢筋.2', '8', 'Φ', '0', '', '311+15*d', '净长+端头', '431', '9', '0', '0', '0.17', '1.532', '直筋', '绑扎'],
  ['3', '水平纵筋.1', '6', 'Φ', '0', '', '1450+12.5*d', '净长+两倍弯钩', '1525', '6', '0', '0', '0.338', '2.030', '直筋', '绑扎'],
];

const Grade = () => <svg viewBox="0 0 9 10" className="mx-auto h-2.5 w-[9px]"><path d="M4.500 0v10M.5 2.500h8v4h-8zM2 8.500h5M3 .5h3" fill="none" stroke="#000" /></svg>;

function Shape({ row }: { row: number }) {
  if (row === 2) {
    return <svg viewBox="0 0 200 25" className="block h-[25px] w-[200px]" fontSize="10"><text x="78" y="15" fill="red">1450</text></svg>;
  }
  return (
    <svg viewBox="0 0 200 60" className="block h-[60px] w-[200px]" fontSize="10">
      {row === 0 ? (
        <>
          <path d="M94 58V19q0-2 2-2h10q2 0 2 2v39" fill="none" stroke="#000" strokeWidth="2" />
          <text transform="translate(96 6) rotate(90)">360</text><text transform="translate(95 24) rotate(90)">120</text>
          <text transform="translate(107 24) rotate(-90)">360</text><text transform="translate(107 54) rotate(-90)">119203</text>
        </>
      ) : (
        <>
          <path d="M67 57V14h64q4 0 4 4v38" fill="none" stroke="#000" strokeWidth="2" />
          <text x="105" y="12">192</text><text transform="translate(50 16) rotate(90)">120</text><text transform="translate(152 36) rotate(-90)">119</text>
        </>
      )}
    </svg>
  );
}

function BarTable() {
  return (
    <table className={`w-full table-fixed border-separate border-spacing-0 ${song}`}>
      <thead>
        <tr>
          {cols.map(([c, w], i) => (
            <th key={c} className={`h-[19px] overflow-hidden border-r border-b border-[#b8b8b8] p-0 font-normal whitespace-nowrap ${w} ${i === 1 ? 'bg-gradient-to-b from-[#fbdda4] to-[#f2bd62] text-[#5c005c]' : 'bg-gradient-to-b from-white to-[#f1f1f1]'}`}><Song text={c} /></th>
          ))}
        </tr>
      </thead>
      <tbody>
        {rows.map((r, y) => (
          <tr key={r[0]}>
            {r.map((v, x) => (
              <td
                key={x}
                className={`overflow-hidden border-r border-b p-0 whitespace-nowrap ${y === 2 ? 'h-[26px]' : 'h-[61px]'} ${x === 1 ? 'border-r-black border-b-[#c0c0c0]' : 'border-[#c0c0c0]'} ${
                  x === 0 ? (y === 0 ? 'bg-[#ffd28c] text-center text-[#5c005c]' : 'bg-[#fafafa] text-center') : x === 1 && y === 0 ? 'bg-[#aeead9] pl-0.5' : x === 5 ? 'bg-[#ccffd9]' : 'bg-[#ccffd9] pl-0.5'
                }`}
              >
                {x === 3 ? <Grade /> : x === 5 ? <Shape row={y} /> : <Song text={v} />}
              </td>
            ))}
          </tr>
        ))}
      </tbody>
    </table>
  );
}

function BarEditor() {
  return (
    <section className="flex min-h-0 flex-1">
      <div className="flex w-3 shrink-0 flex-col pt-[3px] pl-px">
        <button type="button" aria-label="关闭面板" className="h-[11px] w-[10px] border border-[#5a3535] bg-[#e7b4b4]"><svg viewBox="0 0 8 9" className="h-full w-full"><path d="M1 1l6 7M7 1L1 8" stroke="#111" strokeWidth="1.500" /></svg></button>
        <span className="mt-1 ml-px w-2 flex-1 bg-[radial-gradient(circle,#a8a8a8_1px,transparent_1px)] bg-[length:4px_5px]" />
      </div>
      <div className="flex min-w-0 flex-1 flex-col pb-[3px]">
        <Strip className="mt-0.5 shrink-0 pl-px">
          <IconBtn icon="first" label="首行" /><IconBtn icon="prev" label="上一行" /><IconBtn icon="next" label="下一行" /><IconBtn icon="last" label="末行" />
          <Sep />
          <IconBtn icon="up" label="上移" /><IconBtn icon="down" label="下移" />
          <Sep />
          <Tool icon="insert" label="插入" off />
          <Tool icon="remove" label="删除" off />
          <Tool icon="scale" label="缩尺配筋" off />
          <Tool icon="info" label="钢筋信息" />
          <Tool icon="lib" label="钢筋图库" />
          <Tool icon="other" label="其他" menu="inline" />
          <Tool label="关闭" />
          <Sep />
          <span className="pl-1.5 whitespace-nowrap">单构件钢筋总重(kg) : 6.257</span>
        </Strip>
        <div className="mt-px flex min-h-0 flex-1 flex-col border-2 border-r border-[#b0b0b0] bg-white">
          <div className="flex min-h-0 flex-1">
            <div className="min-w-0 flex-1 overflow-hidden"><BarTable /></div>
            <div className="flex w-[17px] shrink-0 flex-col items-center bg-[#f0f0f0]">
              <span className="flex h-[17px] items-center"><Chev d="M1 7l4-4 4 4" /></span>
              <span className="h-[19px] w-[15px] bg-[#cdcdcd]" />
              <span className="flex flex-1 items-end pb-1"><Chev d="M1 3l4 4 4-4" /></span>
            </div>
          </div>
          <div className="flex h-4 shrink-0 items-center bg-[#f0f0f0] pr-5">
            <span className="flex w-4 justify-center"><Chev d="M7 1L3 5l4 4" /></span>
            <span className="h-[15px] w-[70%] bg-[#cdcdcd]" />
            <span className="ml-auto"><Chev d="M3 1l4 4-4 4" /></span>
          </div>
        </div>
      </div>
    </section>
  );
}

const cell = 'flex items-center border border-[#d4d4d4] bg-[#f7f7f7] pl-px';

function StatusBar() {
  return (
    <footer className={`relative flex h-[21px] shrink-0 gap-0.5 pt-px ${song}`}>
      <span className={`${cell} w-[148px]`}><Song text="X=52603 Y=5432" /></span>
      <span className={`${cell} w-[78px]`}><Song text="层高:3.47m" /></span>
      <span className={`${cell} w-[98px]`}><Song text="底标高:-3.5m" /></span>
      <span className={`${cell} w-[48px]`}><Song text="1(1)" /></span>
      <span className={`${cell} flex-1`} />
      <div className="absolute -top-1 right-0 flex h-[25px] items-center gap-[7px] rounded border border-[#a9c8e4] bg-white pr-1 pl-8 text-[#1c74c4]">
        <svg viewBox="0 0 28 28" className="absolute -top-1.5 -left-0.5 h-7 w-7"><path d="M2 5l23-4 3 21-22 5z" fill="#f04f1c" /><path d="M20 7q-10-2-11 3 0 3 6 3 5 1 4 4-2 4-11 2" fill="none" stroke="#fff" strokeWidth="3.500" /></svg>
        <b className="text-[14px]">中</b>
        <svg viewBox="0 0 12 14" className="h-3.5 w-3"><circle cx="3" cy="4" r="1.500" fill="none" stroke="currentColor" /><path d="M9 8v3l-2 2" fill="none" stroke="currentColor" strokeWidth="2.500" /></svg>
        <Mic className="h-4 w-4" fill="currentColor" />
        <svg viewBox="0 0 16 16" className="h-4 w-4"><rect x="0" y="3" width="16" height="11" rx="1" fill="currentColor" /><path d="M2 6h12M2 8.500h12" stroke="#fff" strokeWidth="1.300" strokeDasharray="2 1" /><path d="M4 11.500h8" stroke="#fff" strokeWidth="1.300" /></svg>
        <svg viewBox="0 0 16 16" className="h-4 w-4"><circle cx="6" cy="3" r="3" fill="#b6c0cc" /><path d="M0 13q0-7 6-6 4 0 5 2H7v5z" fill="#b6c0cc" /><path d="M8.500 10v5M11 10.500h3.500l-2 4.500" fill="none" stroke="#a3afbd" strokeWidth="1.500" /></svg>
        <Shirt className="h-4 w-4" fill="currentColor" />
        <Wrench className="h-4 w-4" fill="currentColor" />
      </div>
    </footer>
  );
}

const swirl = 'M26 3q-3 4-9 3Q6 6 5 14q0 9 9 10 8 0 9-7 0-6-7-6-5 0-5 5 1 4 5 3 3-1 2-4M5 9q5-7 13-6';
const bigG = 'M26 2q-2 5-8 5-8 1-8 8 1 5 5 5 4-1 4-5h-5q1-4 6-4 5 0 5 5-2 10-12 10Q2 25 2 15 3 4 15 4q7 0 11-2z';
const apps: { name: string; run?: boolean; on?: boolean; art: ReactNode }[] = [
  { name: '助手', art: <g fill="#e6e6e6"><path d="M3 7q1-4 6-4 5 1 5 10-9 1-11-6zM15 3q9-1 10 6-2 5-8 3-3-4-2-9zM25 14q2 11-6 11-4-2-4-10 5 0 10-1zM13 16q1 8-5 9-6-2-5-9 4-4 10 0z" /></g> },
  { name: '广联达', art: <path d={swirl} fill="none" stroke="#b9b9b9" strokeWidth="1.800" /> },
  { name: '分隔', art: <path d="M12.500 5v18M16.500 5v18" stroke="#555" /> },
  { name: 'Edge', art: <path d="M1 12Q4 1 15 1q12 1 12 14H10q1 7 8 7 4 0 7-2v5q-4 2-9 2Q4 26 4 16q1-6 6-8-6 0-9 4zM10 11h9q0-5-4-5t-5 5z" fill="#0a78d7" fillRule="evenodd" /> },
  { name: '应用商店', art: <><path d="M3 9l21-3v21L3 24z" fill="#fff" /><path d="M8 8q1-6 6-6 4 0 4 5M11 7q1-3 5-3 3 0 3 3" fill="none" stroke="#fff" strokeWidth="1.500" /><path d="M8 12l5-.500v4.500H8zM14 11l6-.500V16h-6zM8 17h5v5l-5-.500zM14 17h6v6l-6-.500z" fill="#000" /></> },
  { name: '资源管理器', art: <><path d="M2 3h9l2 3h13v19H2z" fill="#f7d774" /><path d="M7 14h15v11h-4v-5h-7v5H7z" fill="#36a9e0" /></> },
  { name: 'GGJ', run: true, art: <><path d={bigG} fill="#1c8bc0" /><path d="M6 7Q2 11 3 16l11 10 4-4-8-7-1-8z" fill="#e0566a" /></> },
  { name: '便笺', run: true, art: <><path d="M2 2h24v24H2z" fill="#f2950f" /><path d="M5 6l15-1 1 18-15 1z" fill="#fff4cf" /><path d="M8 10h9M8 13h8M8 16h5" stroke="#b47a1c" /><path d="M12 19L23 4l2 2-11 14z" fill="#8d5a1a" /></> },
  { name: '广联达算量', run: true, on: true, art: <><rect x="2" y="2" width="24" height="24" rx="4" fill="#149cf5" /><path d="M14 6v12q0 3-3 3M7 13q0 5 6 5M10 10q-3 0-3 3M14 8h2M14 14h7q0 4-4 4" fill="none" stroke="#fff" strokeWidth="2" /></> },
  { name: 'GCL', run: true, art: <path d={bigG} fill="#1d8ff0" /> },
  { name: '浏览器', run: true, art: <><circle cx="14" cy="14" r="11" fill="#5fc234" /><path d="M9 14h10q-1-6-5-6t-5 6q1 6 9 4" fill="none" stroke="#fff" strokeWidth="2.800" /></> },
];

function Taskbar() {
  return (
    <div className="flex h-10 shrink-0 items-center bg-[#030b0e] text-white">
      <button type="button" aria-label="开始" className="flex h-full w-12 items-center justify-center"><svg viewBox="0 0 16 16" className="h-4 w-4"><path d="M0 2.200l7-1v6.300H0zM8 1l8-1v7.500H8zM0 8.500h7v6.300l-7-1zM8 8.500h8V16l-8-1z" fill="#fff" /></svg></button>
      <label className="flex h-full w-[344px] shrink-0 items-center bg-[#333] pr-3.5 pl-[9px]">
        <span className="h-5 w-5 shrink-0 rounded-full border-[3px] border-white" />
        <input aria-label="搜索" placeholder="在这里输入你要搜索的内容" className="ml-[7px] min-w-0 flex-1 bg-transparent text-[14px] outline-none placeholder:text-[#9a9a9a]" />
        <Mic className="h-[18px] w-3.5 text-[#aaa]" strokeWidth={1.5} />
      </label>
      <div className="flex h-full pl-0.5">
        {apps.map((a) => (
          <button
            key={a.name}
            type="button"
            aria-label={a.name}
            className={`flex items-center justify-center border-b-2 pt-0.5 ${a.on ? 'w-[49px] bg-[#35414a]' : a.name === '分隔' ? 'w-[25px]' : 'mx-1 w-[41px]'} ${a.run ? 'border-[#76b9ed]' : 'border-transparent'}`}
          >
            <svg viewBox="0 0 28 28" className={a.run ? 'h-[26px] w-[26px]' : 'h-[22px] w-[22px]'}>{a.art}</svg>
          </button>
        ))}
      </div>
      <div className="ml-auto flex h-full items-center gap-2">
        <p className="mr-2 text-center leading-[17px]">27%<br />CPU使用</p>
        <ChevronUp className="h-4 w-4" />
        <svg viewBox="0 0 18 14" className="h-3.5 w-[18px]"><path d="M6 5h10v7H4V9M16 7h2v3h-2M2 1v3M5 1v3M1 4h5v2q-2 3-4 0z" fill="none" stroke="#fff" /><path d="M7 7h7v3H7z" fill="#fff" /></svg>
        <Wifi className="h-4 w-4 -rotate-45" strokeWidth={1.5} />
        <Volume2 className="h-[18px] w-[18px]" strokeWidth={1.5} />
        <svg viewBox="0 0 24 14" className="h-3.5 w-6"><path d="M.5.5h23v13H.5z" fill="none" stroke="#fff" /><path d="M3 4.500h18M3 7.500h18" stroke="#fff" strokeDasharray="2 1" /><path d="M6 10.500h12" stroke="#fff" /></svg>
        <span className="text-[14px]">中</span>
        <svg viewBox="0 0 16 16" className="mx-1 h-4 w-4"><path d="M1 2l13-2 2 13-13 3z" fill="#f04f1c" /><path d="M12 4q-7-1-7 2 0 2 4 2 3 1 2 3-2 2-7 1" fill="none" stroke="#fff" strokeWidth="2" /></svg>
        <p className="ml-2 text-center leading-[19px]">10:02<br />2017/8/31</p>
        <span className="relative flex w-12 justify-center">
          <MessageSquareText className="h-5 w-5" fill="#fff" stroke="#000" />
          <span className="absolute top-2 left-6 flex h-4 w-4 items-center justify-center rounded-full border border-[#999] bg-[#222] text-[11px]">2</span>
        </span>
      </div>
    </div>
  );
}

export default function App() {
  return (
    <div className="flex h-screen flex-col overflow-hidden bg-[#f0f0f0] font-['Noto_Sans','Noto_Sans_CJK_SC',sans-serif] text-xs leading-4 text-black">
      <TitleBar />
      <MenuBar />
      <MainTools />
      <main className="flex min-h-0 flex-1 gap-1">
        <Sidebar />
        <div className="flex min-w-0 flex-1 flex-col">
          <div className="pl-px"><DrawTools /></div>
          <div className="relative h-[305px] shrink-0 overflow-hidden bg-black">
            <Viewport />
            <LayerPanel />
          </div>
          <SnapBar />
          <BarEditor />
        </div>
      </main>
      <StatusBar />
      <Taskbar />
    </div>
  );
}
